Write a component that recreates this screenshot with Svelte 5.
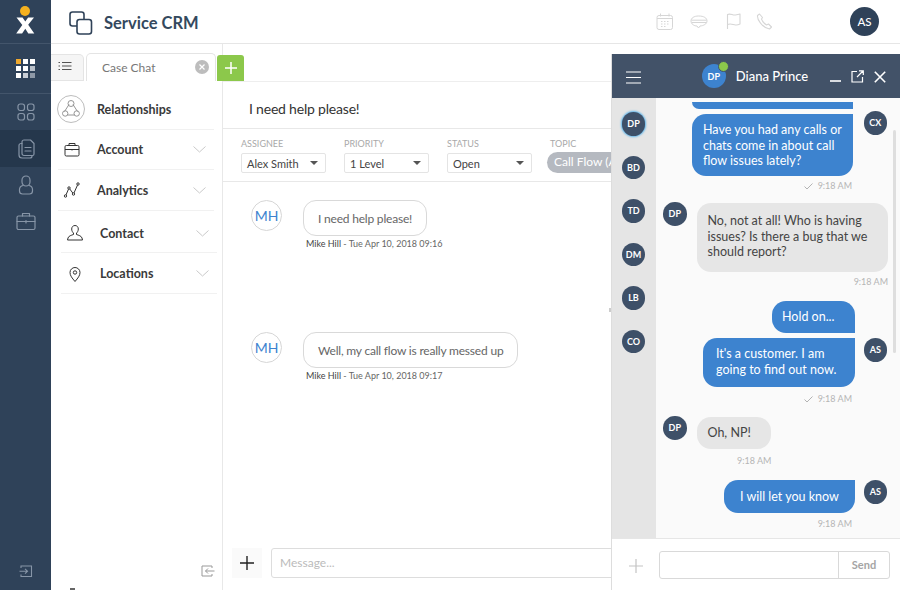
<script>
  const railItems = [
    { key: 'apps', active: false },
    { key: 'cases', active: true },
    { key: 'user', active: false },
    { key: 'work', active: false }
  ];
  const gridCells = ['#f0a92e', '#fff', '#fff', '#fff', '#fff', '#b9c0c9', '#fff', '#c9ced5', '#8e98a6'];
  const panelRows = [
    { key: 'account', label: 'Account', cls: 'r-account' },
    { key: 'analytics', label: 'Analytics', cls: 'r-analytics' },
    { key: 'contact', label: 'Contact', cls: 'r-contact' },
    { key: 'locations', label: 'Locations', cls: 'r-locations' }
  ];
  const fields = [
    { label: 'ASSIGNEE', value: 'Alex Smith' },
    { label: 'PRIORITY', value: '1 Level' },
    { label: 'STATUS', value: 'Open' }
  ];
  const caseMessages = [
    { text: 'I need help please!', time: 'Mike Hill', date: ' - Tue Apr 10, 2018 09:16', cls: 'first' },
    { text: 'Well, my call flow is really messed up', time: 'Mike Hill', date: ' - Tue Apr 10, 2018 09:17', cls: 'second' }
  ];
  const contacts = ['DP', 'BD', 'TD', 'DM', 'LB', 'CO'];
</script>

<div class="app">
  <nav class="rail">
    <div class="logo">
      <svg width="30" height="36" viewBox="0 0 30 36">
        <circle cx="15" cy="12" r="5" fill="#f5b11f" />
        <path d="M6.500 18.500h6l2.800 4 2.800-4h5.900l-5.800 7.300 6.100 8.700h-6l-3-4.700-3.200 4.700H6.200l6.100-8.500z" fill="#fff" />
      </svg>
    </div>
    <div class="grid-wrap">
      <div class="grid-icon">
        {#each gridCells as c}
          <span style="background: {c}"></span>
        {/each}
      </div>
    </div>
    <div class="rail-items">
      {#each railItems as item}
        <div class="rail-item" class:active={item.active}>
          <svg width="22" height="22" viewBox="0 0 22 22" fill="none" stroke="#8795a7" stroke-width="1.200" stroke-linecap="round" stroke-linejoin="round">
            {#if item.key === 'apps'}
              <rect x="3" y="3" width="6.500" height="6.500" rx="2.200" />
              <rect x="12.500" y="3" width="6.500" height="6.500" rx="2.200" />
              <rect x="3" y="12.500" width="6.500" height="6.500" rx="2.200" />
              <rect x="12.500" y="12.500" width="6.500" height="6.500" rx="2.200" />
            {:else if item.key === 'cases'}
              <path d="M7 5.500H6a2 2 0 0 0-2 2V17a3 3 0 0 0 3 3h8a2 2 0 0 0 2-2v-.5" />
              <path d="M9 2h6.500L19 5.500V16a1.500 1.500 0 0 1-1.500 1.500H9A2 2 0 0 1 7 15.500V4a2 2 0 0 1 2-2z" />
              <path d="M10 9.500h6M10 13h6" />
            {:else if item.key === 'user'}
              <rect x="7" y="2" width="8" height="10" rx="4" />
              <path d="M8 11.500c-2.500.5-3.500 2-3.500 4v1.500a3 3 0 0 0 3 3h7a3 3 0 0 0 3-3v-1.500c0-2-1-3.500-3.500-4" />
            {:else}
              <rect x="2" y="6" width="18" height="13.500" rx="1.500" />
              <path d="M7.500 6V3.500h7V6M2 11.500h18M11 10.500v2.500" />
            {/if}
          </svg>
        </div>
      {/each}
    </div>
    <div class="rail-bottom">
      <svg width="14" height="14" viewBox="0 0 14 14" fill="none" stroke="#8795a7" stroke-width="1.100">
        <path d="M2 4V2h10.500v10.500H2v-2M0.500 7.200h8M6 4.800l2.500 2.400L6 9.600" />
      </svg>
    </div>
  </nav>

  <div class="main">
    <header class="topbar">
      <svg class="brand-icon" width="24" height="24" viewBox="0 0 24 24" fill="none" stroke="#2f4258" stroke-width="1.600" stroke-linejoin="round">
        <rect x="1" y="1" width="14" height="14" rx="2.500" />
        <rect x="8" y="8.500" width="14.500" height="14.500" rx="2.500" fill="#fff" />
      </svg>
      <span class="brand">Service CRM</span>
      <div class="top-icons">
        <svg width="18" height="18" viewBox="0 0 18 18" fill="none" stroke="#d6d6d6" stroke-width="1">
          <rect x="1" y="2.500" width="15.500" height="14" rx="2" />
          <path d="M4.500 0.500v3M13 0.500v3M1 5.500h15.500" />
          <path d="M5 8.500h1.500M8 8.500h1.500M11 8.500h1.500M5 11h1.500M8 11h1.500M11 11h1.500M5 13.500h1.500M8 13.500h1.500" />
        </svg>
        <svg width="18" height="14" viewBox="0 0 18 14" fill="none" stroke="#d6d6d6" stroke-width="1">
          <path d="M8.500 1C4 1 1 3 1 6s3 5 6 5l1.500 2 1.500-2c3.500-.2 7-2 7-5s-3-5-8.500-5z" />
          <path d="M1.500 5.200h15M2 7.500h14" />
        </svg>
        <svg class="flag" width="16" height="17" viewBox="0 0 16 17" fill="none" stroke="#d6d6d6" stroke-width="1.100" stroke-linejoin="round">
          <path d="M1.500 1.500c3-1.500 5 1 8 .5 1.500-.2 3-.5 4.500-1v10c-1.500.8-3 1.200-4.500 1-3-.5-5-2-8-.5zM1.500 1.500V16" />
        </svg>
        <svg width="17" height="17" viewBox="0 0 17 17" fill="none" stroke="#d6d6d6" stroke-width="1.100" stroke-linejoin="round">
          <path d="M3.500 1 1.500 2.500c-.5 4 4.500 12 12 13.500l2-2-3-3-2 1c-2-1-4-3.500-5-6l1-1.500z" />
        </svg>
      </div>
      <div class="me">AS</div>
    </header>

    <div class="workspace">
      <aside class="side">
        <div class="tabs">
          <div class="tab-list">
            <svg width="14" height="10" viewBox="0 0 14 10" fill="none" stroke="#555" stroke-width="1.100">
              <path d="M4 1.500h9.500M4 5h9.500M4 8.500h9.500M.5 1.500h1.500M.5 5h1.500M.5 8.500h1.500" />
            </svg>
          </div>
          <div class="tab-current">
            <span>Case Chat</span>
            <span class="tab-close">
              <svg width="6" height="6" viewBox="0 0 6 6" stroke="#fff" stroke-width="1.200"><path d="M.5.500l5 5M5.500.500l-5 5" /></svg>
            </span>
          </div>
          <div class="tab-add">
            <svg width="12" height="12" viewBox="0 0 12 12" stroke="#fff" stroke-width="1.500"><path d="M6 0v12M0 6h12" /></svg>
          </div>
        </div>

        <div class="rel-row">
          <span class="rel-icon">
            <svg width="20" height="20" viewBox="0 0 20 20" fill="none" stroke="#8a8a8a" stroke-width="0.900">
              <path d="M8 5.500 3.500 12.500M12 5.500l4.500 7M6.500 16h7" />
              <path d="M7 4.500a3 3 0 0 1 6 0 3 3 0 0 1-6 0zM1.500 14.500a2.700 2.700 0 0 1 5.400 0 2.700 2.700 0 0 1-5.400 0zM13 14.500a2.700 2.700 0 0 1 5.400 0 2.700 2.700 0 0 1-5.400 0z" />
            </svg>
          </span>
          <span class="rel-label">Relationships</span>
        </div>

        {#each panelRows as row}
          <div class="panel-row {row.cls}">
            <span class="row-icon">
              <svg width="18" height="18" viewBox="0 0 18 18" fill="none" stroke="#333" stroke-width="1" stroke-linejoin="round">
                {#if row.key === 'account'}
                  <rect x="2" y="4.500" width="14" height="10.500" rx="1.300" />
                  <path d="M6 4.500V2.500h6v2M2 8.500h14M9 8v1.500" />
                {:else if row.key === 'analytics'}
                  <path d="M2.500 15 6 7l4.500 6L15 3" />
                  <circle cx="2.500" cy="15" r="1.200" fill="#fff" />
                  <circle cx="6" cy="7" r="1.200" fill="#fff" />
                  <circle cx="10.500" cy="13" r="1.200" fill="#fff" />
                  <circle cx="15" cy="3" r="1.200" fill="#fff" />
                {:else if row.key === 'contact'}
                  <path d="M9 1.500c-2 0-3.300 1.500-3.300 3.500 0 1.800.8 3.200 1.800 4v1.500c-2 .7-5 1.500-5.500 3.500l-.5 2h15l-.5-2c-.5-2-3.500-2.800-5.500-3.500V9c1-.8 1.800-2.200 1.800-4 0-2-1.300-3.500-3.300-3.500z" />
                {:else}
                  <path d="M9 16.500c-3-3.500-5-6-5-9a5 5 0 0 1 10 0c0 3-2 5.500-5 9z" />
                  <circle cx="9" cy="7.500" r="1.700" />
                {/if}
              </svg>
            </span>
            <span class="row-label">{row.label}</span>
            <svg class="chevron" width="13" height="7" viewBox="0 0 13 7" fill="none" stroke="#c9c9c9" stroke-width="1"><path d="M.5.500 6.500 6l6-5.500" /></svg>
          </div>
        {/each}

        <span class="peek"></span>
        <div class="side-collapse">
          <svg width="14" height="12" viewBox="0 0 14 12" fill="none" stroke="#999" stroke-width="1">
            <path d="M11 3V1H1v10h10V9M13.500 6H4.500M7 3.500 4.500 6 7 8.500" />
          </svg>
        </div>
      </aside>

      <section class="case">
        <div class="case-title">I need help please!</div>
        <div class="case-fields">
          {#each fields as f}
            <div class="field">
              <span class="field-label">{f.label}</span>
              <div class="select">
                <span>{f.value}</span>
                <i class="caret"></i>
              </div>
            </div>
          {/each}
          <div class="field topic">
            <span class="field-label">TOPIC</span>
            <div class="pill">Call Flow (A</div>
          </div>
        </div>
        <div class="case-body">
          {#each caseMessages as m}
            <div class="case-msg {m.cls}">
              <div class="mh">MH</div>
              <div>
                <div class="case-bubble">{m.text}</div>
                <div class="case-meta"><b>{m.time}</b>{m.date}</div>
              </div>
            </div>
          {/each}
        </div>
        <div class="composer">
          <div class="composer-add">
            <svg width="14" height="14" viewBox="0 0 14 14" stroke="#222" stroke-width="1.400"><path d="M7 0v14M0 7h14" /></svg>
          </div>
          <div class="composer-input">Message...</div>
        </div>
      </section>
    </div>
  </div>

  <div class="chat">
    <div class="chat-head">
      <svg class="burger" width="15" height="13" viewBox="0 0 15 13" stroke="#fff" stroke-width="1.200"><path d="M0 1h15M0 6.500h15M0 12h15" /></svg>
      <div class="chat-who">
        <span class="who-avatar">DP<i class="online"></i></span>
        <span class="who-name">Diana Prince</span>
      </div>
      <div class="chat-actions">
        <svg width="11" height="11" viewBox="0 0 11 11" stroke="#fff" stroke-width="1.600"><path d="M0 10h11" /></svg>
        <svg width="13" height="13" viewBox="0 0 13 13" fill="none" stroke="#fff" stroke-width="1.200"><path d="M6 1.500H1v10.500h10.500V7M6 7l6-6M8 .8h4.300V5" /></svg>
        <svg width="12" height="12" viewBox="0 0 12 12" stroke="#fff" stroke-width="1.600"><path d="M.8.800l10.400 10.400M11.200.800.800 11.200" /></svg>
      </div>
    </div>

    <div class="chat-main">
      <div class="contacts">
        {#each contacts as c, i}
          <div class="dot" class:selected={i === 0}>{c}</div>
        {/each}
      </div>

      <div class="thread">
        <div class="sent-row r-stub"><div class="bubble out stub"></div></div>

        <div class="sent-row cx-row">
          <div class="bubble out b-calls">Have you had any calls or chats come in about call flow issues lately?</div>
          <div class="dot side-dot">CX</div>
        </div>
        <div class="stamp right s-calls">
          <svg width="9" height="7" viewBox="0 0 9 7" fill="none" stroke="#aaa" stroke-width="0.900"><path d="M.5 3.500 3 6 8.500.5" /></svg>
          9:18 AM
        </div>

        <div class="got-row r-no">
          <div class="dot side-dot">DP</div>
          <div class="bubble in b-no">No, not at all! Who is having issues? Is there a bug that we should report?</div>
        </div>
        <div class="stamp far">9:18 AM</div>

        <div class="sent-row r-hold"><div class="bubble out b-hold">Hold on...</div></div>
        <div class="sent-row r-cust">
          <div class="bubble out b-cust">It's a customer. I am going to find out now.</div>
          <div class="dot side-dot">AS</div>
        </div>
        <div class="stamp right s-cust">
          <svg width="9" height="7" viewBox="0 0 9 7" fill="none" stroke="#aaa" stroke-width="0.900"><path d="M.5 3.500 3 6 8.500.5" /></svg>
          9:18 AM
        </div>

        <div class="got-row r-np">
          <div class="dot side-dot">DP</div>
          <div class="bubble in b-np">Oh, NP!</div>
        </div>
        <div class="stamp np">9:18 AM</div>

        <div class="sent-row r-let">
          <div class="bubble out b-let">I will let you know</div>
          <div class="dot side-dot">AS</div>
        </div>
        <div class="stamp right s-let">9:18 AM</div>

        <span class="scrollbar"></span>
      </div>
    </div>

    <div class="chat-foot">
      <svg width="16" height="16" viewBox="0 0 16 16" stroke="#c4c4c4" stroke-width="1.200"><path d="M8 1v14M1 8h14" /></svg>
      <div class="send-box">
        <div class="send-input"></div>
        <div class="send-btn">Send</div>
      </div>
    </div>
    <span class="handle"></span>
  </div>
</div>

<style>
  :global(body) {
    margin: 0;
  }

  .app {
    position: relative;
    display: flex;
    width: 900px;
    height: 590px;
    overflow: hidden;
    background: #fff;
    font-family: Lato, "Open Sans", sans-serif;
    color: #333;
  }

  /* left rail */
  .rail {
    display: flex;
    flex-direction: column;
    width: 51px;
    flex: none;
    background: #2f4259;
  }

  .logo {
    height: 43px;
    display: flex;
    justify-content: center;
    border-bottom: 1px solid #43556b;
  }

  .logo svg {
    margin-top: -1px;
    margin-left: -1px;
  }

  .grid-wrap {
    height: 49px;
    display: flex;
    align-items: center;
    justify-content: center;
    border-bottom: 1px solid #43556b;
  }

  .grid-icon {
    display: grid;
    grid-template-columns: repeat(3, 5px);
    grid-auto-rows: 5px;
    gap: 2px;
  }

  .rail-items {
    display: flex;
    flex-direction: column;
    flex: 1;
  }

  .rail-item {
    height: 36px;
    display: flex;
    align-items: center;
    justify-content: center;
  }

  .rail-item.active {
    height: 37px;
    background: #25374c;
  }

  .rail-bottom {
    height: 38px;
    display: flex;
    justify-content: center;
    padding-top: 12px;
    box-sizing: border-box;
  }

  /* main area */
  .main {
    flex: 1;
    display: flex;
    flex-direction: column;
    min-width: 0;
  }

  .topbar {
    height: 43px;
    flex: none;
    display: flex;
    align-items: center;
    padding: 0 21px 0 18px;
    border-bottom: 1px solid #e6e6e6;
  }

  .brand-icon {
    margin-top: 3px;
  }

  .brand {
    margin: 2px 0 0 11px;
    font-size: 16.500px;
    font-weight: 700;
    color: #34495e;
  }

  .top-icons {
    margin-left: auto;
    display: flex;
    align-items: center;
    gap: 16px;
    margin-right: 77px;
  }

  .flag {
    margin: 0 -2px 0 2px;
  }

  .me {
    width: 29px;
    height: 29px;
    flex: none;
    border-radius: 50%;
    background: #2f4259;
    color: #fff;
    font-size: 11.500px;
    font-weight: 500;
    display: flex;
    align-items: center;
    justify-content: center;
  }

  .workspace {
    flex: 1;
    display: flex;
    min-height: 0;
  }

  /* case side panel */
  .side {
    position: relative;
    width: 172px;
    flex: none;
    box-sizing: border-box;
    border-right: 1px solid #e8e8e8;
  }

  .tabs {
    display: flex;
    align-items: flex-end;
    height: 37px;
    width: 193px;
    position: relative;
    z-index: 1;
  }

  .tab-list {
    width: 33px;
    height: 27px;
    box-sizing: border-box;
    background: #f5f5f5;
    border: 1px solid #e4e4e4;
    border-left: 0;
    border-radius: 0 5px 0 0;
    padding: 0 5px 3px 0;
    display: flex;
    align-items: center;
    justify-content: center;
  }

  .tab-current {
    margin-left: 2px;
    width: 130px;
    height: 28px;
    box-sizing: border-box;
    padding: 0 6px 1px 15px;
    background: #fff;
    border: 1px solid #e4e4e4;
    border-bottom: 0;
    border-radius: 5px 5px 0 0;
    display: flex;
    align-items: center;
    justify-content: space-between;
    font-size: 12px;
    color: #777;
  }

  .tab-close {
    width: 14px;
    height: 14px;
    border-radius: 50%;
    background: #bdbdbd;
    display: flex;
    align-items: center;
    justify-content: center;
  }

  .tab-add {
    margin-left: 1px;
    width: 27px;
    height: 26px;
    background: #8cc84b;
    border-radius: 3px 3px 0 0;
    display: flex;
    align-items: center;
    justify-content: center;
  }

  .rel-row {
    height: 41px;
    box-sizing: border-box;
    margin: 8px 8px 0 6px;
    display: flex;
    align-items: center;
    border-bottom: 1px solid #f1f1f1;
  }

  .rel-icon {
    width: 26px;
    height: 26px;
    border: 1px solid #bdbdbd;
    border-radius: 50%;
    display: flex;
    align-items: center;
    justify-content: center;
  }

  .rel-label,
  .row-label {
    font-size: 12.500px;
    font-weight: 700;
    color: #3a3a3a;
  }

  .rel-label {
    margin-left: 12px;
  }

  .panel-row {
    display: flex;
    align-items: center;
    box-sizing: border-box;
    border-bottom: 1px solid #f1f1f1;
  }

  .r-account,
  .r-analytics {
    margin: 0 8px 0 7px;
  }

  .r-contact,
  .r-locations {
    margin: 0 5px 0 10px;
  }

  .r-account { height: 40px; }
  .r-analytics { height: 41px; }
  .r-contact { height: 42px; padding-top: 3px; }
  .r-locations { height: 41px; padding-top: 1px; }

  .row-icon {
    width: 39px;
    padding-left: 5px;
    box-sizing: border-box;
    display: flex;
  }

  .chevron {
    margin-left: auto;
    margin-right: 8px;
  }

  .peek {
    position: absolute;
    left: 19px;
    bottom: 0;
    width: 5px;
    height: 2px;
    background: #666;
  }

  .side-collapse {
    position: absolute;
    right: 7px;
    bottom: 13px;
    display: flex;
  }

  /* case detail */
  .case {
    flex: 1;
    min-width: 0;
    display: flex;
    flex-direction: column;
    padding-top: 37px;
    box-sizing: border-box;
    position: relative;
  }

  .case::before {
    content: '';
    position: absolute;
    top: 37px;
    left: 0;
    right: 0;
    border-top: 1px solid #eee;
  }

  .case-title {
    height: 48px;
    flex: none;
    display: flex;
    align-items: center;
    padding: 7px 0 0 26px;
    font-size: 14px;
    letter-spacing: -0.2px;
    color: #333;
    border-bottom: 1px solid #e8e8e8;
    box-sizing: border-box;
  }

  .case-fields {
    height: 53px;
    flex: none;
    box-sizing: border-box;
    display: flex;
    gap: 18px;
    padding: 9px 0 0 18px;
    border-bottom: 1px solid #e8e8e8;
    overflow: hidden;
  }

  .field {
    display: flex;
    flex-direction: column;
    flex: none;
  }

  .field-label {
    font-size: 9px;
    color: #a9a9a9;
    line-height: 12px;
    margin-bottom: 3px;
  }

  .select {
    width: 85px;
    height: 20px;
    box-sizing: border-box;
    border: 1px solid #e4e4e4;
    border-radius: 2px;
    padding: 0 7px 0 5px;
    display: flex;
    align-items: center;
    justify-content: space-between;
    font-size: 11px;
    color: #444;
  }

  .caret {
    width: 0;
    height: 0;
    border-left: 4px solid transparent;
    border-right: 4px solid transparent;
    border-top: 4px solid #555;
  }

  .pill {
    width: 90px;
    height: 21px;
    margin: -1px 0 0 -3px;
    border-radius: 11px;
    padding-left: 7px;
    background: #b5b9c0;
    color: #fff;
    font-size: 12px;
    line-height: 20px;
    white-space: nowrap;
  }

  .case-body {
    flex: 1;
    display: flex;
    flex-direction: column;
    padding-left: 28px;
    min-height: 0;
  }

  .case-msg {
    display: flex;
    gap: 21px;
  }

  .case-msg.first {
    margin-top: 18px;
    height: 132px;
  }

  .mh {
    width: 31px;
    height: 31px;
    box-sizing: border-box;
    border: 1px solid #d6d6d6;
    border-radius: 50%;
    color: #3d83cf;
    font-size: 14px;
    display: flex;
    align-items: center;
    justify-content: center;
  }

  .case-bubble {
    width: max-content;
    height: 36px;
    box-sizing: border-box;
    padding: 0 14px;
    border: 1.500px solid #d9d9d9;
    border-radius: 13px;
    font-size: 12px;
    letter-spacing: -0.2px;
    color: #666;
    display: flex;
    align-items: center;
  }

  .case-meta {
    margin: 1px 0 0 3px;
    font-size: 9px;
    line-height: 13px;
    color: #666;
  }

  .case-meta b {
    font-weight: 400;
    color: #444;
  }

  .composer {
    height: 42px;
    flex: none;
    box-sizing: border-box;
    display: flex;
    gap: 9px;
    padding-left: 9px;
  }

  .composer-add {
    width: 30px;
    height: 30px;
    background: #fafafa;
    display: flex;
    align-items: center;
    justify-content: center;
  }

  .composer-input {
    flex: 1;
    height: 30px;
    box-sizing: border-box;
    border: 1px solid #ddd;
    border-radius: 3px;
    padding-left: 8px;
    font-size: 12px;
    line-height: 28px;
    color: #bbb;
  }

  /* floating chat */
  .chat {
    position: absolute;
    top: 54px;
    right: 0;
    bottom: 0;
    width: 289px;
    display: flex;
    flex-direction: column;
    background: #fafafa;
    border-left: 1px solid #ddd;
    box-sizing: border-box;
  }

  .handle {
    position: absolute;
    left: -3px;
    top: 254px;
    width: 2px;
    height: 4px;
    background: #ccc;
  }

  .chat-head {
    height: 44px;
    flex: none;
    position: relative;
    display: flex;
    align-items: center;
    justify-content: center;
    background: #425268;
  }

  .burger {
    position: absolute;
    left: 14px;
    top: 17px;
  }

  .chat-who {
    display: flex;
    align-items: center;
    gap: 10px;
    margin-left: -2px;
  }

  .who-avatar {
    position: relative;
    width: 24px;
    height: 24px;
    border-radius: 50%;
    background: #3d83cf;
    color: #fff;
    font-size: 9px;
    font-weight: 700;
    display: flex;
    align-items: center;
    justify-content: center;
  }

  .online {
    position: absolute;
    top: -3px;
    right: -3px;
    width: 9px;
    height: 9px;
    border: 1px solid #425268;
    border-radius: 50%;
    background: #8cc84b;
  }

  .who-name {
    font-size: 13px;
    font-weight: 500;
    color: #fff;
  }

  .chat-actions {
    position: absolute;
    right: 14px;
    top: 16px;
    display: flex;
    align-items: center;
    gap: 10px;
  }

  .chat-main {
    flex: 1;
    display: flex;
    min-height: 0;
  }

  .contacts {
    width: 44px;
    flex: none;
    background: #e5e5e5;
    display: flex;
    flex-direction: column;
    align-items: center;
    gap: 20px;
    padding: 14px 1px 0 0;
    box-sizing: border-box;
  }

  .dot {
    width: 23.500px;
    height: 23.500px;
    flex: none;
    border-radius: 50%;
    background: #3e5068;
    color: #fff;
    font-size: 9px;
    font-weight: 700;
    display: flex;
    align-items: center;
    justify-content: center;
  }

  .dot.selected {
    box-shadow: 0 0 2px 1px #5cb4ea;
  }

  .thread {
    position: relative;
    flex: 1;
    min-width: 0;
    padding-top: 4px;
    overflow: hidden;
  }

  .sent-row {
    display: flex;
    justify-content: flex-end;
    align-items: flex-start;
    position: relative;
    padding-right: 45px;
  }

  .r-stub,
  .cx-row {
    padding-right: 47px;
  }

  .sent-row .side-dot {
    position: absolute;
    right: 13px;
  }

  .got-row {
    display: flex;
    align-items: flex-start;
    gap: 10px;
    padding-left: 7px;
  }

  .got-row .side-dot {
    margin-top: -1px;
  }

  .bubble {
    box-sizing: border-box;
    font-size: 12.500px;
    line-height: 15.500px;
  }

  .out {
    background: #3d83cf;
    color: #fff;
    border-radius: 14px 0 14px 14px;
    padding: 8px 11px;
  }

  .in {
    background: #e6e6e6;
    color: #444;
    border-radius: 14px;
    padding: 10px 11px;
  }

  .stub {
    width: 161px;
    height: 7px;
    padding: 0;
    border-radius: 0 0 0 12px;
  }

  .cx-row { margin-top: 5px; }
  .cx-row .side-dot { top: -3px; }

  .b-calls {
    width: 161px;
    height: 62px;
  }

  .stamp {
    font-size: 9px;
    line-height: 12px;
    color: #b5b5b5;
  }

  .stamp.right {
    display: flex;
    align-items: center;
    justify-content: flex-end;
    gap: 5px;
    padding-right: 48px;
  }

  .s-calls { margin-top: 4px; }
  .s-cust { margin-top: 6px; }
  .s-let { margin-top: 5px; }

  .stamp.far {
    text-align: right;
    padding-right: 12px;
    margin-top: 4px;
  }

  .stamp.np {
    padding-left: 81px;
    margin-top: 6px;
  }

  .r-no { margin-top: 11px; }
  .b-no { width: 191px; height: 69px; }

  .r-hold { margin-top: 13px; }
  .b-hold {
    width: 83px;
    height: 32px;
    padding: 8px 10px;
    border-radius: 14px 14px 0 14px;
  }

  .r-cust { margin-top: 5px; }
  .r-cust .side-dot { top: 0; }
  .b-cust {
    width: 152px;
    height: 49px;
    padding: 8px 13px;
  }

  .r-np { margin-top: 12px; }
  .b-np { width: 74px; height: 32px; padding: 8px 11px; }

  .r-let { margin-top: 13px; }
  .r-let .side-dot { top: 0; }
  .b-let {
    width: 131px;
    height: 33px;
    padding: 9px 16px;
    white-space: nowrap;
  }

  .scrollbar {
    position: absolute;
    right: 4px;
    top: 32px;
    width: 3px;
    height: 223px;
    border-radius: 2px;
    background: #dedede;
  }

  .chat-foot {
    height: 52px;
    flex: none;
    box-sizing: border-box;
    display: flex;
    align-items: flex-start;
    gap: 15px;
    padding: 12px 10px 0 16px;
    background: #fff;
    border-top: 1px solid #e6e6e6;
  }

  .chat-foot svg {
    margin-top: 7px;
  }

  .send-box {
    flex: 1;
    height: 28px;
    display: flex;
    box-sizing: border-box;
    border: 1px solid #d9d9d9;
    border-radius: 3px;
    background: #fff;
  }

  .send-input {
    flex: 1;
    border-right: 1px solid #d9d9d9;
  }

  .send-btn {
    width: 50px;
    text-align: center;
    font-size: 11px;
    font-weight: 700;
    line-height: 26px;
    color: #a5a5a5;
  }
</style>
